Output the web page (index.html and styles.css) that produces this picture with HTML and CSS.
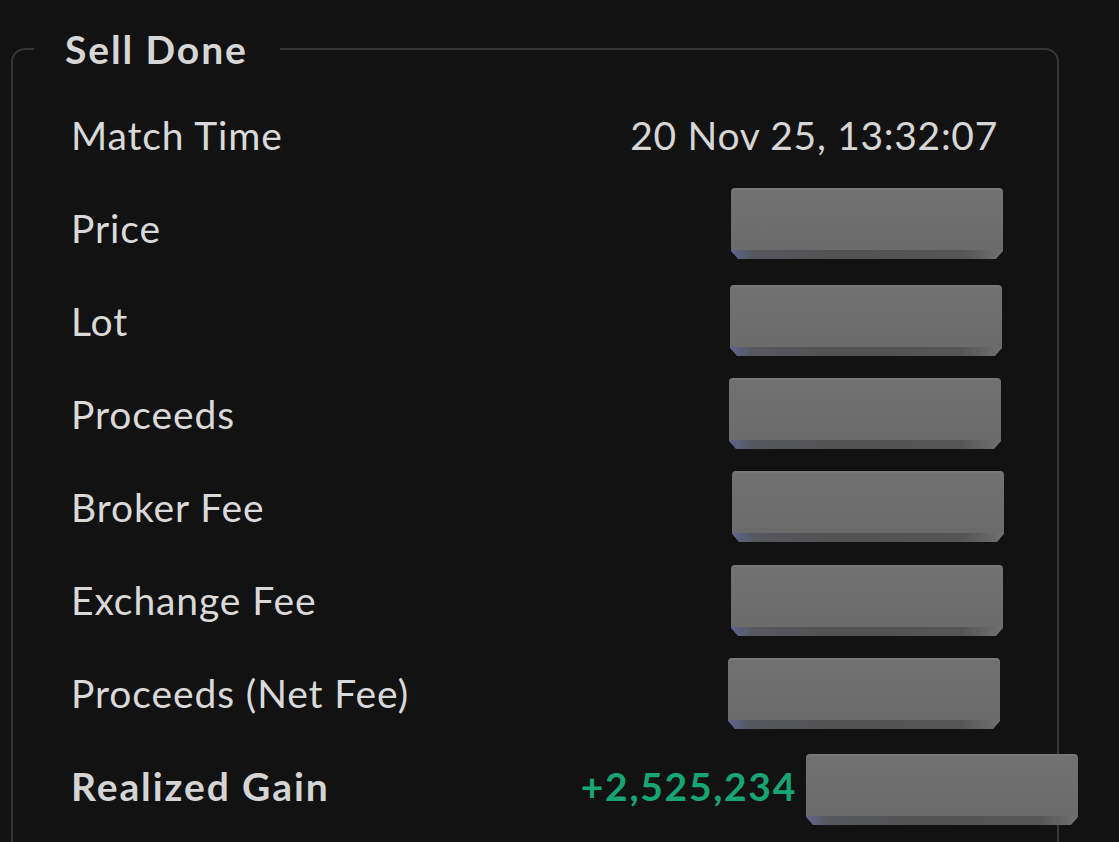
FILE: index.html
```html
<!DOCTYPE html>
<html lang="en">
<head>
<meta charset="utf-8">
<title>Sell Done</title>
<link rel="stylesheet" href="styles.css">
</head>
<body>
<main class="page">
  <fieldset class="card">
    <legend class="card-title">Sell Done</legend>
    <div class="row">
      <span class="label">Match Time</span>
      <span class="value">20 Nov 25, 13:32:07</span>
    </div>
    <div class="row">
      <span class="label">Price</span>
      <span class="value"><span class="redact r-price"></span></span>
    </div>
    <div class="row">
      <span class="label">Lot</span>
      <span class="value"><span class="redact r-lot"></span></span>
    </div>
    <div class="row">
      <span class="label">Proceeds</span>
      <span class="value"><span class="redact r-proceeds"></span></span>
    </div>
    <div class="row">
      <span class="label">Broker Fee</span>
      <span class="value"><span class="redact r-broker"></span></span>
    </div>
    <div class="row">
      <span class="label">Exchange Fee</span>
      <span class="value"><span class="redact r-exchange"></span></span>
    </div>
    <div class="row">
      <span class="label">Proceeds (Net Fee)</span>
      <span class="value"><span class="redact r-net"></span></span>
    </div>
    <div class="row">
      <span class="label label-bold">Realized Gain</span>
      <span class="value value-gain"><span class="gain">+2,525,234</span><span class="redact r-gain"></span></span>
    </div>
  </fieldset>
</main>
</body>
</html>
```

FILE: styles.css
```css
html, body {
  margin: 0;
  padding: 0;
  background: #121212;
}

body {
  font-family: "Lato", "Liberation Sans", sans-serif;
  color: #d8d8d8;
  overflow: hidden;
}

.page {
  padding-top: 31px;
  padding-left: 11px;
}

.card {
  box-sizing: border-box;
  width: 1048px;
  margin: 0;
  border: 2px solid #363636;
  border-radius: 14px;
  padding: 21px 59px 120px 58px;
}

.card-title {
  margin-left: -37px;
  padding: 0 32px 0 31px;
  font-size: 39px;
  line-height: 36px;
  font-weight: 700;
  letter-spacing: 1.9px;
  color: #d6d6d6;
}

.row {
  height: 93px;
  display: flex;
  align-items: center;
  justify-content: space-between;
}

.label {
  font-size: 39px;
  letter-spacing: 0.9px;
  color: #d9d9d9;
}

.label-bold {
  font-weight: 700;
  letter-spacing: 1.9px;
  color: #d4d4d4;
}

.value {
  font-size: 39px;
  letter-spacing: 0.7px;
  color: #d6d6d6;
  display: flex;
  align-items: center;
}

.gain {
  font-weight: 700;
  letter-spacing: 1.7px;
  color: #17a673;
  margin-right: 9px;
}

.redact {
  display: block;
  width: 272px;
  height: 71px;
  border-radius: 4px 4px 2px 2px;
  clip-path: polygon(0 0, 100% 0, 100% calc(100% - 8px), calc(100% - 7px) 100%, 7px 100%, 0 calc(100% - 8px));
  background:
    linear-gradient(to right, #5f6590 0, #56585e 8%, #525252 40%, #555555 85%, #707070 100%) bottom / 100% 9px no-repeat,
    linear-gradient(to bottom, #7c7c7c 0, #717171 3px, #6d6d6d 60%, #6a6a6a 100%);
}

.r-price { margin: -8px -5px 0 0; }
.r-lot { margin: 0 -4px 0 0; }
.r-proceeds { margin: 0 -3px 0 0; }
.r-broker { margin: 0 -6px 0 0; }
.r-exchange { margin: 2px -5px 0 0; }
.r-net { margin: 2px -2px 0 0; }
.r-gain { margin: 8px -80px 0 0; }
```
